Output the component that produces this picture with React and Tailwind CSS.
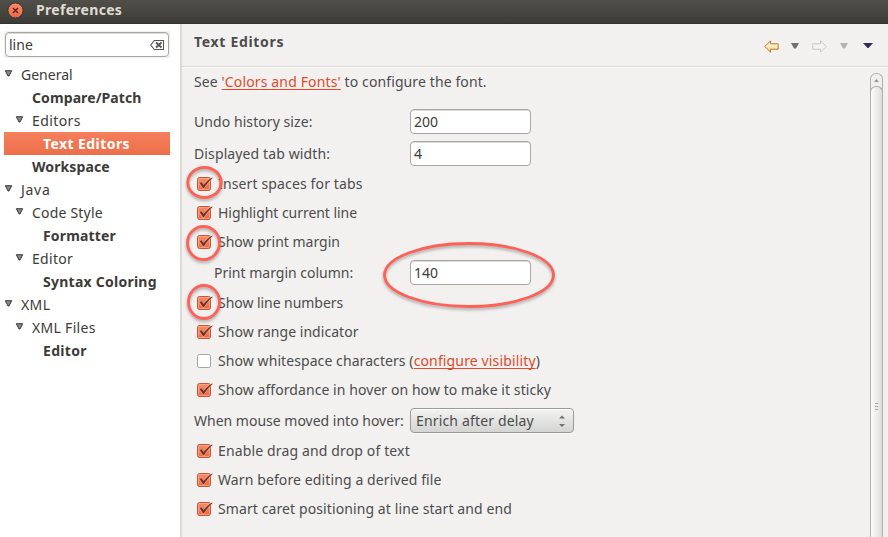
import React from "react";

const FONT = "font-['Noto_Sans','Open_Sans',sans-serif]";

function TreeRow({ label, arrow, bold, selected, indent, text = "" }) {
  return (
    <div
      className={`relative flex h-[23px] w-[166px] items-center whitespace-nowrap ${indent} ${
        selected ? "bg-gradient-to-b from-[#f67f5c] to-[#ec6f49] text-white" : "text-[#3c3b37]"
      } ${bold ? "font-bold" : ""}`}
    >
      <span className="flex w-[17px] shrink-0">
        {arrow && (
          <svg width="9" height="7" viewBox="0 0 9 7" className="-mt-[3px]">
            <path d="M1.300.7h6.400L5 6H4z" fill="#888783" stroke="#3c3b37" />
          </svg>
        )}
      </span>
      <span className={text}>{label}</span>
    </div>
  );
}

function Check({ checked = true, text = "", children }) {
  return (
    <div className="flex h-[29px] items-start pl-[3px]">
      <svg width="17" height="16" viewBox="0 0 17 16" className="mt-[6px] shrink-0">
        {checked ? (
          <>
            <rect x=".5" y="1.5" width="13" height="13" rx="2" fill="url(#orange)" stroke="#c4573a" />
            <rect x="1.5" y="2.5" width="11" height="11" rx="1" fill="none" stroke="#ffad91" strokeOpacity=".65" />
            <path d="M3 7.200l3.300 3.900C8.300 7.800 11 4.800 14.800 2.200" fill="none" stroke="#ffc0a6" strokeWidth="3.400" strokeOpacity=".4" />
            <path d="M2.700 7.300l1.700-1 2.200 2.600C8.800 6 11.700 3.400 15.300 1.400l.4.600C11.900 5 9.500 8.300 7 12.100H6z" fill="#6b342a" />
          </>
        ) : (
          <rect x=".5" y="1.500" width="13" height="13" rx="2" fill="#fff" stroke="#a7a4a0" />
        )}
      </svg>
      <span className={`ml-1 mt-[4px] leading-5 ${text}`}>{children}</span>
    </div>
  );
}

function Field({ label, value, text = "", pad = "" }) {
  return (
    <div className="flex h-8 items-start pt-[3px]">
      <div className={`w-[216px] shrink-0 leading-[25px] ${pad}`}>
        <span className={text}>{label}</span>
      </div>
      <div className="h-[25px] w-[121px] rounded-[4px] border border-[#aaa7a3] bg-white pl-[3px] leading-[23px] text-[#3c3b37] shadow-[inset_0_1px_0_#dddbd8]">
        {value}
      </div>
    </div>
  );
}

function Link({ children }) {
  return (
    <span className="tracking-[0.14px] text-[#e04a2b] underline decoration-[#e8472a] decoration-1 underline-offset-2 [text-decoration-skip-ink:none]">
      {children}
    </span>
  );
}

function Caret({ fill }) {
  return (
    <svg width="8" height="6" viewBox="0 0 8 6">
      <path d="M0 0h8L5 5.500H3z" fill={fill} />
    </svg>
  );
}

export default function App() {
  return (
    <div className={`relative flex h-[537px] w-[888px] flex-col overflow-hidden bg-[#f2f1f0] text-[14px] text-[#4c4c4c] ${FONT}`}>
      <header className="flex h-6 shrink-0 items-center border-b border-[#33322e] bg-gradient-to-b from-[#504f49] to-[#3d3c38] pl-[7px]">
        <svg width="17" height="17" viewBox="0 0 17 17" className="-mt-[3px]">
          <circle cx="8.500" cy="8.500" r="7.600" fill="url(#orange)" stroke="#35332e" />
          <path d="M6 6l5 5M11 6l-5 5" stroke="#542116" strokeWidth="1.300" />
        </svg>
        <span className="-mt-[5px] ml-[12px] font-bold tracking-[0.3px] text-[#dfdbd2]">Preferences</span>
      </header>
      <div className="flex min-h-0 flex-1">
        <aside className="w-[182px] shrink-0 border-r-2 border-[#dddbd8] bg-white pl-1 pt-[7px]">
          <div className="flex h-[27px] w-[166px] items-center justify-center bg-[#f2f1f0]">
            <div className="flex h-[25px] w-[164px] items-center justify-between rounded-[4px] border border-[#aaa7a3] bg-white px-[3px] text-[#3c3b37] shadow-[inset_0_1px_0_#dddbd8]">
              <span>line</span>
              <svg width="15" height="12" viewBox="0 0 15 12" fill="none">
                <path d="M4.300 1.500h9.200v9H4.300L.8 6z" stroke="#555" strokeWidth="1.100" />
                <path d="M6 3.500l5.500 5M11.500 3.500l-5.500 5" stroke="#555" strokeWidth="1.900" />
              </svg>
            </div>
          </div>
          <div className="mt-[5px]">
            <TreeRow label="General" arrow indent="pl-0" />
            <TreeRow label="Compare/Patch" bold indent="pl-[11px]" text="tracking-[0.1px]" />
            <TreeRow label="Editors" arrow indent="pl-[11px]" text="tracking-[0.4px]" />
            <TreeRow label="Text Editors" bold selected indent="pl-[22px]" text="tracking-[0.42px]" />
            <TreeRow label="Workspace" bold indent="pl-[11px]" text="tracking-[0.1px]" />
            <TreeRow label="Java" arrow indent="pl-0" text="tracking-[0.7px]" />
            <TreeRow label="Code Style" arrow indent="pl-[11px]" text="tracking-[0.2px]" />
            <TreeRow label="Formatter" bold indent="pl-[22px]" text="tracking-[0.15px]" />
            <TreeRow label="Editor" arrow indent="pl-[11px]" text="tracking-[0.3px]" />
            <TreeRow label="Syntax Coloring" bold indent="pl-[22px]" text="tracking-[0.25px]" />
            <TreeRow label="XML" arrow indent="pl-0" text="tracking-[0.4px]" />
            <TreeRow label="XML Files" arrow indent="pl-[11px]" text="tracking-[0.3px]" />
            <TreeRow label="Editor" bold indent="pl-[22px]" text="tracking-[0.3px]" />
          </div>
        </aside>
        <main className="flex min-w-0 flex-1 flex-col">
          <div className="flex h-[43px] shrink-0 items-center justify-between border-b border-[#dcdad8] pl-3 pr-[14px] shadow-[0_1px_0_#fafafa]">
            <span className="-mt-[8px] font-bold tracking-[0.68px]">Text Editors</span>
            <div className="mt-[2px] flex items-center">
              <svg width="15" height="13" viewBox="0 0 15 13" className="mr-[12px]">
                <path d="M.8 6.500L6.500.8v3h7.700v5.400H6.500v3z" fill="url(#gold)" stroke="#b9792e" />
              </svg>
              <Caret fill="#72716f" />
              <svg width="15" height="13" viewBox="0 0 15 13" className="ml-[13px] mr-[13px]">
                <path d="M14.200 6.500L8.500.8v3H.8v5.400h7.700v3z" fill="#f4f3f2" stroke="#cbc9c5" />
              </svg>
              <Caret fill="#b5b3b1" />
              <svg width="11" height="6" viewBox="0 0 11 6" className="ml-[15px]">
                <path d="M0 0h10L5.500 5h-1z" fill="#302b58" />
              </svg>
            </div>
          </div>
          <div className="flex min-h-0 flex-1 justify-between">
            <section className="whitespace-nowrap pl-3">
              <div className="h-[39px] pt-[5px] leading-5 tracking-[0.11px]">
                See <Link>'Colors and Fonts'</Link> to configure the font.
              </div>
              <Field label="Undo history size:" value="200" text="tracking-[0.07px]" />
              <Field label="Displayed tab width:" value="4" text="tracking-[0.12px]" />
              <Check text="tracking-[0.14px]">Insert spaces for tabs</Check>
              <Check text="tracking-[-0.05px]">Highlight current line</Check>
              <Check>Show print margin</Check>
              <Field label="Print margin column:" value="140" pad="pl-5" />
              <Check text="tracking-[-0.05px]">Show line numbers</Check>
              <Check text="tracking-[0.04px]">Show range indicator</Check>
              <Check checked={false} text="tracking-[0.08px]">
                Show whitespace characters (<Link>configure visibility</Link>)
              </Check>
              <Check text="tracking-[0.07px]">Show affordance in hover on how to make it sticky</Check>
              <div className="flex h-8 items-start pt-[3px]">
                <div className="w-[216px] shrink-0 leading-[25px]">When mouse moved into hover:</div>
                <div className="flex h-[25px] w-[164px] items-center justify-between rounded-[4px] border border-[#9c9a97] bg-gradient-to-b from-[#f3f3f2] to-[#d4d4d3] pl-[5px] pr-[7px] shadow-[inset_0_1px_0_#fff,0_1px_0_#fafafa]">
                  <span className="tracking-[0.16px]">Enrich after delay</span>
                  <svg width="8" height="13" viewBox="0 0 8 13" fill="#72716f">
                    <path d="M1 4.500l3-3 3 3zM1 10l3 3 3-3z" />
                  </svg>
                </div>
              </div>
              <Check text="tracking-[0.14px]">Enable drag and drop of text</Check>
              <Check text="tracking-[0.11px]">Warn before editing a derived file</Check>
              <Check text="tracking-[0.1px]">Smart caret positioning at line start and end</Check>
            </section>
            <div className="mr-[5px] mt-[6px] flex w-[13px] shrink-0 flex-col overflow-hidden rounded-t-[6px] border border-b-0 border-[#b3b1af] bg-[#f0efee]">
              <svg width="11" height="12" viewBox="0 0 11 12" className="shrink-0">
                <path d="M3 8l2.500-3L8 8z" fill="#999794" />
              </svg>
              <div className="-mx-px flex flex-1 flex-col items-center rounded-t-[6px] border border-b-0 border-[#a9a7a5] bg-gradient-to-r from-[#fcfcfc] to-[#deddda] pt-[316px]">
                <div className="flex flex-col gap-[2px]">
                  <i className="h-px w-[3px] bg-[#aaa8a5]" />
                  <i className="h-px w-[3px] bg-[#aaa8a5]" />
                  <i className="h-px w-[3px] bg-[#aaa8a5]" />
                </div>
              </div>
            </div>
          </div>
        </main>
      </div>
      <svg className="pointer-events-none absolute left-0 top-0" width="888" height="537" fill="none">
        <defs>
          <linearGradient id="orange" x1="0" y1="0" x2="0" y2="1">
            <stop stopColor="#f98c6c" />
            <stop offset="1" stopColor="#ec6740" />
          </linearGradient>
          <linearGradient id="gold" x1="0" y1="0" x2="0" y2="1">
            <stop stopColor="#fffdf0" />
            <stop offset="1" stopColor="#fbd68a" />
          </linearGradient>
        </defs>
        <g stroke="#ff6156" strokeWidth="2.800" className="drop-shadow-[0_2px_1.500px_rgba(0,0,0,0.3)]">
          <ellipse cx="204.500" cy="182.500" rx="16.700" ry="15" />
          <ellipse cx="203.500" cy="243" rx="16" ry="16.500" />
          <ellipse cx="204" cy="302" rx="15.500" ry="16.500" />
          <ellipse cx="469" cy="275" rx="84.500" ry="31.500" />
        </g>
      </svg>
    </div>
  );
}
